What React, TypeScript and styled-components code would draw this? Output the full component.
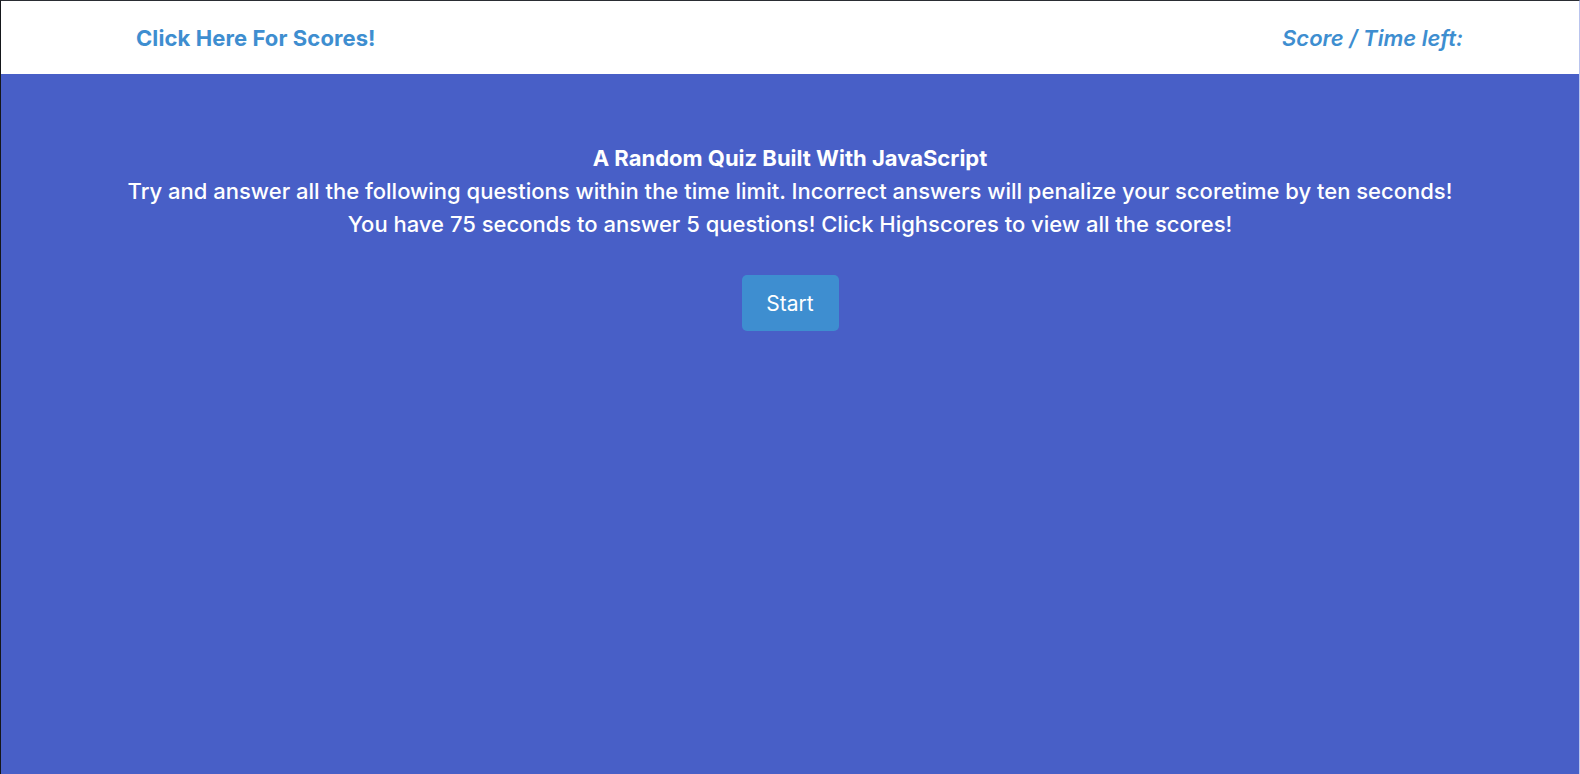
import React from "react";
import styled, { createGlobalStyle } from "styled-components";

const GlobalStyle = createGlobalStyle`
  html, body {
    margin: 0;
    padding: 0;
    height: 100%;
  }
  body {
    font-family: Inter, "Noto Sans", "Liberation Sans", sans-serif;
    background: #485fc7;
  }
  #root {
    min-height: 100vh;
  }
`;

const Frame = styled.div`
  box-sizing: border-box;
  height: 774px;
  display: flex;
  flex-direction: column;
  border-top: 1px solid #2a2d33;
  border-left: 1px solid #15171b;
  border-right: 1px solid #b9c4ee;
  background: #485fc7;
  overflow: hidden;
`;

const Header = styled.header`
  box-sizing: border-box;
  height: 73px;
  background: #ffffff;
  display: flex;
  align-items: center;
  justify-content: space-between;
  padding: 0 116px 0 135px;
`;

const ScoresLink = styled.a`
  color: #3e8ed0;
  font-size: 22px;
  font-weight: 700;
  text-decoration: none;
  cursor: pointer;
  letter-spacing: 0.1px;
`;

const Timer = styled.span`
  color: #3e8ed0;
  font-size: 22px;
  font-weight: 600;
  font-style: italic;
`;

const Main = styled.main`
  flex: 1;
  display: flex;
  flex-direction: column;
  align-items: center;
  padding-top: 68px;
`;

const Intro = styled.div`
  color: #ffffff;
  text-align: center;
  font-size: 22px;
  line-height: 33px;
`;

const Title = styled.div`
  font-weight: 700;
`;

const Line = styled.div`
  font-weight: 500;
`;

const StartButton = styled.button`
  margin-top: 34px;
  width: 97px;
  height: 56px;
  border: none;
  border-radius: 5px;
  background: #3e8ed0;
  color: #ffffff;
  font-family: inherit;
  font-size: 21px;
  font-weight: 400;
  cursor: pointer;
`;

export default function App() {
  return (
    <>
      <GlobalStyle />
      <Frame>
        <Header>
          <ScoresLink>Click Here For Scores!</ScoresLink>
          <Timer>Score / Time left:</Timer>
        </Header>
        <Main>
          <Intro>
            <Title>A Random Quiz Built With JavaScript</Title>
            <Line>
              Try and answer all the following questions within the time limit. Incorrect answers will penalize your scoretime by ten seconds!
            </Line>
            <Line>You have 75 seconds to answer 5 questions! Click Highscores to view all the scores!</Line>
          </Intro>
          <StartButton>Start</StartButton>
        </Main>
      </Frame>
    </>
  );
}
